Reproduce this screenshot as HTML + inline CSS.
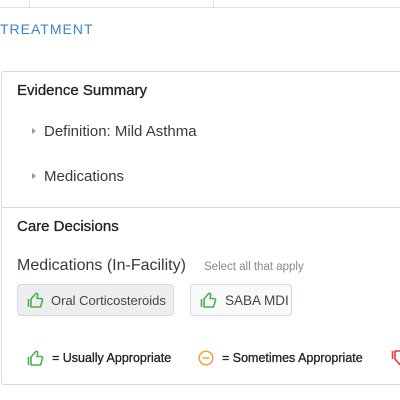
<!DOCTYPE html>
<html><head><style>
*{margin:0;padding:0;box-sizing:border-box}
body{width:400px;height:400px;overflow:hidden;background:#fff;font-family:"Liberation Sans",sans-serif;color:#333;position:relative}
.a{position:absolute;white-space:nowrap}
.btn{position:absolute;height:32px;border:1px solid #d6dadf;border-radius:4px;font-size:13.5px;color:#444;display:flex;align-items:center;padding-left:9px}
svg{display:block}
</style></head><body>
<div class="a" style="left:0;top:7px;width:400px;height:1px;background:#dcdfe3"></div>
<div class="a" style="left:29px;top:0;width:1px;height:7px;background:#dcdfe3"></div>
<div class="a" style="left:213px;top:0;width:1px;height:7px;background:#dcdfe3"></div>
<div class="a" style="left:0;top:21px;font-size:14px;color:#3a86c8;letter-spacing:1px">TREATMENT</div>
<div class="a" style="left:1px;top:71px;width:410px;height:314px;border:1px solid #d6dadf;border-radius:3px"></div>
<div class="a" style="left:1px;top:207px;width:400px;height:1px;background:#d6dadf"></div>
<div class="a" style="left:17px;top:82px;font-size:15px;color:#222;-webkit-text-stroke:0.3px #222">Evidence Summary</div>
<div class="a" style="left:32px;top:128px;width:0;height:0;border-left:4px solid #999;border-top:3.5px solid transparent;border-bottom:3.5px solid transparent"></div>
<div class="a" style="left:44px;top:123px;font-size:15px;color:#3a3a3a">Definition: Mild Asthma</div>
<div class="a" style="left:32px;top:173px;width:0;height:0;border-left:4px solid #999;border-top:3.5px solid transparent;border-bottom:3.5px solid transparent"></div>
<div class="a" style="left:44px;top:168px;font-size:15px;color:#3a3a3a">Medications</div>
<div class="a" style="left:17px;top:218px;font-size:15px;color:#222;-webkit-text-stroke:0.3px #222">Care Decisions</div>
<div class="a" style="left:17px;top:257px;font-size:16px;color:#3a3a3a">Medications (In-Facility)</div>
<div class="a" style="left:204px;top:261px;font-size:11.5px;color:#888">Select all that apply</div>
<div class="btn" style="left:17px;top:284px;width:157px;background:#eceef0">
<svg width="18" height="18" viewBox="0 0 18 18"><path d="M1.5 8v8M4 8v8h9.5l2-6.5c.3-1-.3-2-1.5-2h-4l.7-3.5c.2-1.5-1.4-2.3-2.3-1L4 8z" fill="none" stroke="#4caf50" stroke-width="1.6" stroke-linejoin="round"/></svg>
<span style="margin-left:6px;font-size:13px">Oral Corticosteroids</span></div>
<div class="btn" style="left:190px;top:284px;width:102px;background:#f8f9fa">
<svg width="18" height="18" viewBox="0 0 18 18"><path d="M1.5 8v8M4 8v8h9.5l2-6.5c.3-1-.3-2-1.5-2h-4l.7-3.5c.2-1.5-1.4-2.3-2.3-1L4 8z" fill="none" stroke="#4caf50" stroke-width="1.6" stroke-linejoin="round"/></svg>
<span style="margin-left:7px">SABA MDI</span></div>
<div class="a" style="left:27px;top:349px"><svg width="18" height="18" viewBox="0 0 18 18"><path d="M1.5 8v8M4 8v8h9.5l2-6.5c.3-1-.3-2-1.5-2h-4l.7-3.5c.2-1.5-1.4-2.3-2.3-1L4 8z" fill="none" stroke="#4caf50" stroke-width="1.6" stroke-linejoin="round"/></svg></div>
<div class="a" style="left:52px;top:351px;font-size:12.5px;color:#222;-webkit-text-stroke:0.3px #222">= Usually Appropriate</div>
<div class="a" style="left:198px;top:350px"><svg width="16" height="16" viewBox="0 0 16 16"><circle cx="8" cy="8" r="6.8" fill="none" stroke="#f0a040" stroke-width="1.5"/><path d="M4.5 8h7" stroke="#f0a040" stroke-width="1.5"/></svg></div>
<div class="a" style="left:222px;top:351px;font-size:12.5px;color:#222;-webkit-text-stroke:0.3px #222">= Sometimes Appropriate</div>
<div class="a" style="left:391px;top:349px"><svg width="18" height="18" viewBox="0 0 18 18"><path d="M1.5 10V2M4 10V2h9.5l2 6.5c.3 1-.3 2-1.5 2h-4l.7 3.5c.2 1.5-1.4 2.3-2.3 1L4 10z" fill="none" stroke="#e53935" stroke-width="1.6" stroke-linejoin="round"/></svg></div>
</body></html>
